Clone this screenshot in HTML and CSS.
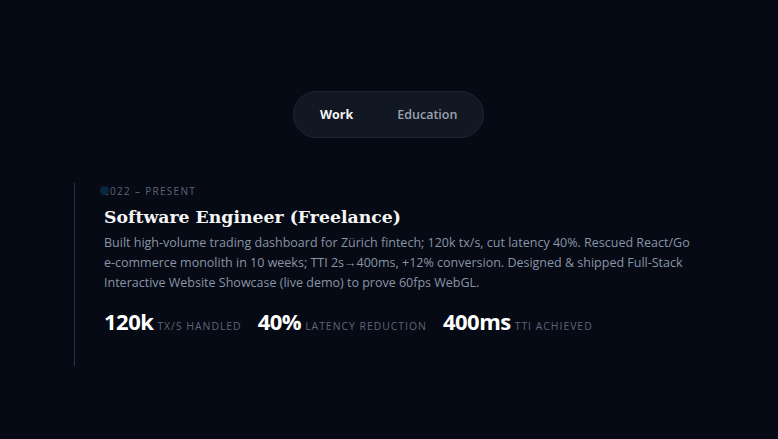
FILE: index.html
```html
<!DOCTYPE html>
<html lang="en">
<head>
<meta charset="utf-8">
<link rel="stylesheet" href="styles.css">
</head>
<body>
<main class="page">
  <div class="tabs">
    <button class="tab active">Work</button>
    <button class="tab">Education</button>
  </div>
  <section class="timeline">
    <article class="item">
      <span class="dot"></span>
      <div class="date">2022 – PRESENT</div>
      <h3 class="title">Software Engineer (Freelance)</h3>
      <p class="desc">Built high-volume trading dashboard for Zürich fintech; 120k tx/s, cut latency 40%. Rescued React/Go e-commerce monolith in 10 weeks; TTI 2s→400ms, +12% conversion. Designed &amp; shipped Full-Stack Interactive Website Showcase (live demo) to prove 60fps WebGL.</p>
      <div class="stats">
        <div class="stat"><span class="num">120k</span><span class="lbl">TX/S HANDLED</span></div>
        <div class="stat"><span class="num">40%</span><span class="lbl">LATENCY REDUCTION</span></div>
        <div class="stat"><span class="num">400ms</span><span class="lbl">TTI ACHIEVED</span></div>
      </div>
    </article>
  </section>
</main>
</body>
</html>
```

FILE: styles.css
```css
* { box-sizing: border-box; }
html, body { margin: 0; padding: 0; }
body {
  background: #050a14;
  font-family: "Open Sans", "Noto Sans", sans-serif;
  color: #e5e7eb;
  width: 778px;
  height: 439px;
  overflow: hidden;
}
.page {
  display: flex;
  flex-direction: column;
  padding-top: 91px;
}
.tabs {
  align-self: center;
  display: flex;
  align-items: center;
  height: 47px;
  width: 191px;
  margin-right: 1px;
  padding: 0 0 0 26px;
  border: 1px solid #1e2533;
  border-radius: 24px;
  background: #111723;
}
.tab {
  border: 0;
  background: transparent;
  font-family: "Open Sans", sans-serif;
  font-size: 12.5px;
  font-weight: 600;
  color: #9aa1ad;
  padding: 0;
  cursor: pointer;
}
.tab.active { color: #f3f4f6; font-weight: 700; }
.tab + .tab { margin-left: 44px; }
.timeline {
  margin-top: 45px;
  margin-left: 74px;
  width: 620px;
}
.item {
  position: relative;
  border-left: 1px solid #2a3140;
  padding: 1px 0 30px 29px;
}
.dot {
  position: absolute;
  left: 25px;
  top: 3px;
  width: 9px;
  height: 9px;
  border-radius: 50%;
  background: #0b2640;
}
.date {
  font-size: 10px;
  letter-spacing: 1.3px;
  color: #5d6678;
  line-height: 14px;
  margin-left: -1px;
}
.title {
  margin: 7px 0 0;
  font-family: "DejaVu Serif", "Liberation Serif", serif;
  font-weight: 700;
  font-size: 17.3px;
  line-height: 24px;
  color: #f5f5f5;
}
.desc {
  margin: 4px 0 0;
  font-size: 12.5px;
  line-height: 20px;
  color: #8a94a6;
}
.stats {
  display: flex;
  gap: 16px;
  margin-top: 13px;
  align-items: baseline;
}
.stat { display: flex; align-items: baseline; gap: 4px; }
.num {
  font-size: 22px;
  font-weight: 700;
  color: #ffffff;
  letter-spacing: -0.5px;
}
.lbl {
  font-size: 10.4px;
  letter-spacing: 1px;
  color: #5d6678;
}
```
